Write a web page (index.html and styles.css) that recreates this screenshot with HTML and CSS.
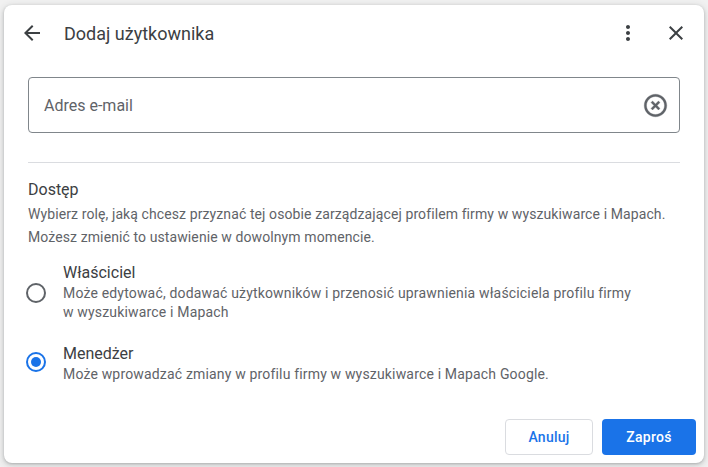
FILE: index.html
```html
<!DOCTYPE html>
<html lang="pl">
<head>
<meta charset="utf-8">
<link rel="stylesheet" href="styles.css">
</head>
<body>
<div class="dialog">
  <div class="header">
    <svg class="icon" viewBox="0 0 24 24"><path d="M20 11H7.83l5.59-5.59L12 4l-8 8 8 8 1.41-1.41L7.83 13H20v-2z"/></svg>
    <div class="title">Dodaj użytkownika</div>
    <svg class="icon more" viewBox="0 0 24 24"><path d="M12 8c1.1 0 2-.9 2-2s-.9-2-2-2-2 .9-2 2 .9 2 2 2zm0 2c-1.1 0-2 .9-2 2s.9 2 2 2 2-.9 2-2-.9-2-2-2zm0 6c-1.1 0-2 .9-2 2s.9 2 2 2 2-.9 2-2-.9-2-2-2z"/></svg>
    <svg class="icon close" viewBox="0 0 24 24"><path d="M19 6.41L17.59 5 12 10.59 6.41 5 5 6.41 10.59 12 5 17.59 6.41 19 12 13.41 17.59 19 19 17.59 13.41 12z"/></svg>
  </div>
  <div class="content">
    <div class="field">
      <span class="placeholder">Adres e-mail</span>
      <svg class="clear" viewBox="0 0 24 24"><path d="M14.59 8L12 10.59 9.41 8 8 9.41 10.59 12 8 14.59 9.41 16 12 13.41 14.59 16 16 14.59 13.41 12 16 9.41 14.59 8zM12 2C6.47 2 2 6.47 2 12s4.470 10 10 10 10-4.47 10-10S17.53 2 12 2zm0 18c-4.41 0-8-3.59-8-8s3.59-8 8-8 8 3.59 8 8-3.59 8-8 8z"/></svg>
    </div>
    <div class="divider"></div>
    <div class="section-title">Dostęp</div>
    <div class="section-desc">Wybierz rolę, jaką chcesz przyznać tej osobie zarządzającej profilem firmy w wyszukiwarce i Mapach.<br>Możesz zmienić to ustawienie w dowolnym momencie.</div>
    <div class="options">
      <div class="option">
        <span class="radio"></span>
        <div class="opt-text">
          <div class="opt-label">Właściciel</div>
          <div class="opt-desc">Może edytować, dodawać użytkowników i przenosić uprawnienia właściciela profilu firmy<br>w wyszukiwarce i Mapach</div>
        </div>
      </div>
      <div class="option">
        <span class="radio checked"></span>
        <div class="opt-text">
          <div class="opt-label">Menedżer</div>
          <div class="opt-desc">Może wprowadzać zmiany w profilu firmy w wyszukiwarce i Mapach Google.</div>
        </div>
      </div>
    </div>
  </div>
  <div class="actions">
    <button class="btn secondary">Anuluj</button>
    <button class="btn primary">Zaproś</button>
  </div>
</div>
</body>
</html>
```
FILE: styles.css
```css
html, body {
  margin: 0;
  padding: 0;
}
body {
  background: #f1f1f1;
  padding: 5px 4px 0 4px;
  font-family: Roboto, "Liberation Sans", sans-serif;
  width: 700px;
  height: 462px;
  overflow: hidden;
}
.dialog {
  width: 700px;
  height: 458px;
  background: #fff;
  border-radius: 8px;
  box-shadow: 0 1px 3px rgba(60,64,67,0.3), 0 2px 6px 2px rgba(60,64,67,0.12);
  display: flex;
  flex-direction: column;
  box-sizing: border-box;
}
.header {
  height: 56px;
  display: flex;
  align-items: center;
  padding: 0 16px;
}
.icon {
  width: 24px;
  height: 24px;
  fill: #3c4043;
  flex: none;
}
.title {
  margin-left: 20px;
  font-size: 18px;
  color: #3c4043;
  flex: 1;
}
.close {
  margin-left: 24px;
}
.content {
  padding: 16px 24px 0 24px;
  flex: 1;
}
.field {
  height: 56px;
  border: 1px solid #80868b;
  border-radius: 4px;
  box-sizing: border-box;
  display: flex;
  align-items: center;
  padding: 0 10px 0 15px;
}
.placeholder {
  flex: 1;
  font-size: 16px;
  color: #5f6368;
}
.clear {
  width: 27px;
  height: 27px;
  fill: #5f6368;
  stroke: #5f6368;
  stroke-width: 0.3;
}
.divider {
  height: 1px;
  background: #dadce0;
  margin-top: 29px;
}
.section-title {
  margin-top: 15px;
  font-size: 16px;
  line-height: 24px;
  color: #3c4043;
}
.section-desc {
  margin-top: 1px;
  font-size: 14px;
  line-height: 23px;
  letter-spacing: 0.1px;
  color: #5f6368;
}
.options {
  margin-top: 14px;
  margin-left: -2px;
  display: flex;
  flex-direction: column;
  gap: 22px;
}
.option {
  display: flex;
  align-items: center;
  gap: 17px;
}
.radio {
  width: 20px;
  height: 20px;
  box-sizing: border-box;
  border: 2px solid #5f6368;
  border-radius: 50%;
  flex: none;
  display: flex;
  align-items: center;
  justify-content: center;
}
.radio.checked {
  border-color: #1a73e8;
  margin-top: -4px;
}
.radio.checked::after {
  content: "";
  width: 10px;
  height: 10px;
  border-radius: 50%;
  background: #1a73e8;
}
.opt-label {
  font-size: 16px;
  line-height: 20px;
  color: #3c4043;
}
.opt-desc {
  margin-top: 1px;
  font-size: 14px;
  line-height: 19px;
  letter-spacing: 0.17px;
  color: #5f6368;
}
.actions {
  display: flex;
  justify-content: flex-end;
  gap: 9px;
  padding: 0 8px 8px 0;
}
.btn {
  height: 36px;
  border-radius: 4px;
  font-family: Roboto, "Liberation Sans", sans-serif;
  font-weight: 500;
  font-size: 14px;
  letter-spacing: 0.25px;
  cursor: pointer;
}
.secondary {
  width: 88px;
  background: #fff;
  border: 1px solid #dadce0;
  color: #1a73e8;
}
.primary {
  width: 94px;
  background: #1a73e8;
  border: none;
  color: #fff;
}
```
